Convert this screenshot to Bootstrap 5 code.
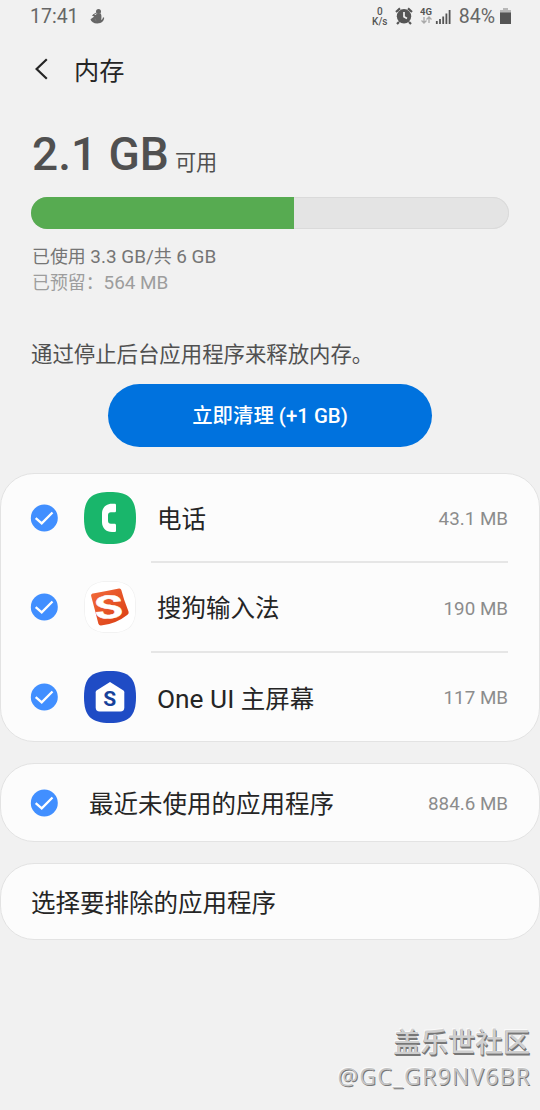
<!DOCTYPE html>
<html lang="zh-CN">
<head>
<meta charset="utf-8">
<meta name="viewport" content="width=device-width, initial-scale=1">
<title>内存</title>
<link href="https://cdn.jsdelivr.net/npm/bootstrap@5.3.0/dist/css/bootstrap.min.css" rel="stylesheet">
<style>
  body { background: #f1f1f1; color: #252525; font-family: Roboto, "Noto Sans CJK SC", sans-serif; width: 540px; height: 1110px; overflow: hidden; }
  svg { display: block; flex: none; }
  .statusbar { height: 34px; padding: 0 28px 0 30px; color: #666; font-size: 19.5px; line-height: 34px; }
  .rate { width: 18px; font-size: 10px; font-weight: 500; color: #555; margin-top: -1px; }
  .rate div { height: 10px; line-height: 10px; }
  .pagebar { height: 70px; padding: 5px 34px 0; font-size: 25.2px; }
  .pagebar svg { margin-top: -6px; }
  .free { height: 93px; padding: 0 32px; color: #505050; }
  .free strong { font-size: 46px; font-weight: 500; line-height: 60px; }
  .free span { font-size: 21.2px; margin-left: 6px; }
  .meter { height: 32px; margin: 0 31px; border-radius: 16px; background: #e4e4e4; box-shadow: inset 0 0 0 1px #dadada; }
  .meter .progress-bar { background: #57ab51; }
  .usage { height: 103px; padding: 15px 32px 0; font-size: 18.9px; line-height: 26px; color: #757575; }
  .usage .zh { font-size: 17.9px; }
  .usage .reserved { color: #9d9d9d; }
  .hint { height: 52px; padding: 1px 31px 0; font-size: 21.4px; line-height: 44px; color: #505050; }
  .btn-clean { width: 324px; height: 63px; border-radius: 32px; background: #0072de; color: #fff; font-size: 20.4px; font-weight: 500; }
  .btn-clean span { position: relative; top: 1px; }
  .panel { background: #fcfcfc; border: 1px solid #e3e3e3; border-radius: 34px; font-size: 24.5px; color: #252525; }
  .apps { height: 269px; margin-top: 26px; }
  .app-row { height: 89.5px; padding-left: 29px; }
  .app-row > svg { margin-top: -2px; }
  .app-body { height: 89px; margin-left: 14px; padding: 5px 0 0 6px; margin-right: 31px; border-bottom: 2px solid #e6e6e6; }
  .app-row:last-child .app-body { border-color: transparent; }
  .app-icon { margin-left: 25px; }
  .latin { font-size: 26.3px; }
  .amount { font-size: 18.8px; color: #8c8c8c; margin-top: -2px; }
  .unused { height: 79px; margin-top: 21px; padding: 5px 31px 0 29px; }
  .unused svg { margin-top: -5px; }
  .exclude { height: 77px; margin-top: 21px; padding: 5px 31px 0 30px; }
  .stamp { margin-top: 84px; padding-right: 10px; font-family: "Open Sans", "Noto Sans CJK SC", sans-serif; text-align: right; }
  .stamp .site { font-size: 27.3px; line-height: 36px; font-weight: 500; color: #cfcfcf; text-shadow: 0 1px 0 #777, 1px 2px 0 #777, -1px -1px 0 #fafafa; }
  .stamp .user { font-size: 23px; line-height: 32px; letter-spacing: 1.2px; margin-right: -1px; color: #c4c4c4; text-shadow: 1px 1px 0 #777, -1px -1px 0 #fafafa; }
</style>
</head>
<body>
<svg width="0" height="0" class="position-absolute">
  <symbol id="tick" viewBox="0 0 28 28"><circle cx="14.300" cy="14" r="13.500" fill="#418fff"/><path d="M5.700 14.200l6 5.200L22.500 8.500" fill="none" stroke="#fff" stroke-width="2.300"/></symbol>
  <symbol id="tile" viewBox="0 0 52 52"><path d="M26 0C45 0 52 7 52 26S45 52 26 52 0 45 0 26 7 0 26 0Z"/></symbol>
</svg>

<header class="statusbar d-flex align-items-center">
  <span>17:41</span>
  <svg style="margin:-2px 0 0 11px" width="15" height="17" viewBox="0 0 15 17"><circle cx="8.500" cy="3.500" r="2.500" fill="#666"/><path d="M6.500 5.500h4.200c1.200 2 .6 4.500.6 6.500.8-.3 1.500-1.500 1.700-2.800l1.200.6c-.3 3.500-2.400 5.600-7 5.600-3.500 0-6-1.600-6.700-4.200l3.800-2.700-2.300-.8 1.500-1.600 2.500.900z" fill="#666"/><path d="M5 10.500l1.200 2.800M3 6.800L7 4.600" stroke="#777"/></svg>
  <div class="d-flex align-items-center ms-auto">
    <div class="rate text-center"><div>0</div><div>K/s</div></div>
    <svg style="margin:-2px 0 0 6px" width="18" height="18" viewBox="0 0 18 18"><path d="M4 15l-2 2M14 15l2 2M1 5l4-3.600M17 5l-4-3.600" stroke="#555" stroke-width="2.200"/><circle cx="9" cy="9.300" r="7.200" fill="#555"/><path d="M9 5v4.800l3 1.800" fill="none" stroke="#f1f1f1" stroke-width="1.700"/></svg>
    <svg style="margin:-2px 0 0 7px" width="32" height="20" viewBox="0 0 32 20"><text x="0" y="9" font-size="9.500" font-weight="700" fill="#555">4G</text><path d="M4 11v6M1.500 14.500L4 17l2.500-2.500M9 17v-6M6.500 13.500L9 11l2.500 2.500" fill="none" stroke="#aaa" stroke-width="1.300"/><path d="M16.800 15v3M20 13v5M23.200 10.500V18M26.400 7.500V18M29.600 4v14" stroke="#555" stroke-width="1.800"/></svg>
    <span style="margin-left:7px">84%</span>
    <svg style="margin:-1px 0 0 5px" width="12" height="17" viewBox="0 0 12 17"><path d="M3 0h5v2h3v4H0V2h3z" fill="#b8b8b8"/><path d="M0 4.500h11V16H0z" fill="#555"/></svg>
  </div>
</header>

<nav class="pagebar d-flex align-items-center">
  <svg width="15" height="22" viewBox="0 0 15 22"><path d="M12.800 1.200L2.600 11l10.200 9.800" fill="none" stroke="#252525" stroke-width="2.200"/></svg>
  <span style="margin-left:25px">内存</span>
</nav>

<main>
  <div class="free d-flex align-items-baseline"><strong class="mt-3 pt-1">2.1 GB</strong><span>可用</span></div>
  <div class="meter progress"><div class="progress-bar" style="width:55.1%"></div></div>
  <div class="usage"><div><span class="zh">已使用</span> 3.3 GB/<span class="zh">共</span> 6 GB</div><div class="reserved"><span class="zh">已预留：</span>564 MB</div></div>
  <div class="hint">通过停止后台应用程序来释放内存。</div>
  <button class="btn btn-clean d-block mx-auto border-0 p-0"><span>立即清理 (+1 GB)</span></button>

  <section class="panel apps">
    <div class="app-row d-flex align-items-center">
      <svg width="28" height="28"><use href="#tick"/></svg>
      <svg class="app-icon" width="54" height="52" viewBox="-1 0 54 52"><use href="#tile" width="52" height="52" fill="#19b66b"/><path d="M32 13v5.700c0 1-.6 1.500-1.500 1.500h-3.600c-1.800 0-2.900 1.100-2.900 3v5.500c0 1.900 1.100 3 2.900 3h3.600c.9 0 1.500.5 1.500 1.500v5.300c0 1-.6 1.500-1.500 1.500H28c-6 0-10-4-10-10v-8.300c0-6 4-10 10-10h2.500c.9 0 1.500.3 1.500 1.300z" fill="#fff"/></svg>
      <div class="app-body flex-fill d-flex align-items-center justify-content-between"><span>电话</span><span class="amount">43.1 MB</span></div>
    </div>
    <div class="app-row d-flex align-items-center">
      <svg width="28" height="28"><use href="#tick"/></svg>
      <svg class="app-icon" width="54" height="52" viewBox="-1 0 54 52">
        <defs><linearGradient id="flame" x2="1" y2="1"><stop stop-color="#f26c3c"/><stop offset="1" stop-color="#d93c12"/></linearGradient></defs>
        <use href="#tile" width="52" height="52" fill="#eee"/><use href="#tile" x=".5" y=".5" width="51" height="51" fill="#fff"/>
        <path d="M9 12.500Q23 10 35 7.500q1.800-.3 2.300 1.500 2.500 10 7.200 21.500.8 2-1 3.200Q32 43 17 44.500q-2 .2-2.600-1.700Q11 29 7.200 15.200 6.600 13 9 12.500Z" fill="url(#flame)"/>
        <text transform="translate(25.500 37.200) rotate(-5) scale(1.450 1)" text-anchor="middle" font-size="32" font-weight="700" fill="#fff" stroke="#fff" stroke-width=".4">S</text>
      </svg>
      <div class="app-body flex-fill d-flex align-items-center justify-content-between"><span>搜狗输入法</span><span class="amount">190 MB</span></div>
    </div>
    <div class="app-row d-flex align-items-center">
      <svg width="28" height="28"><use href="#tick"/></svg>
      <svg class="app-icon" width="54" height="52" viewBox="-1 0 54 52"><use href="#tile" width="52" height="52" fill="#1f4cc5"/><path d="M26 11L39.500 19.500q.8.600.8 1.700V36.500q0 4-4 4H15.700q-4 0-4-4V21.200q0-1.100.8-1.700Z" fill="#fff"/><text x="25.800" y="34.700" text-anchor="middle" font-size="21" font-weight="700" fill="#17429b">S</text></svg>
      <div class="app-body flex-fill d-flex align-items-center justify-content-between"><span><span class="latin">One UI </span>主屏幕</span><span class="amount">117 MB</span></div>
    </div>
  </section>

  <section class="panel unused d-flex align-items-center">
    <svg width="28" height="28"><use href="#tick"/></svg>
    <span style="margin-left:31px">最近未使用的应用程序</span><span class="amount ms-auto">884.6 MB</span>
  </section>
  <section class="panel exclude d-flex align-items-center">选择要排除的应用程序</section>
</main>

<footer class="stamp"><div class="site">盖乐世社区</div><div class="user">@GC_GR9NV6BR</div></footer>
<script src="https://cdn.jsdelivr.net/npm/bootstrap@5.3.0/dist/js/bootstrap.bundle.min.js"></script>
</body>
</html>
